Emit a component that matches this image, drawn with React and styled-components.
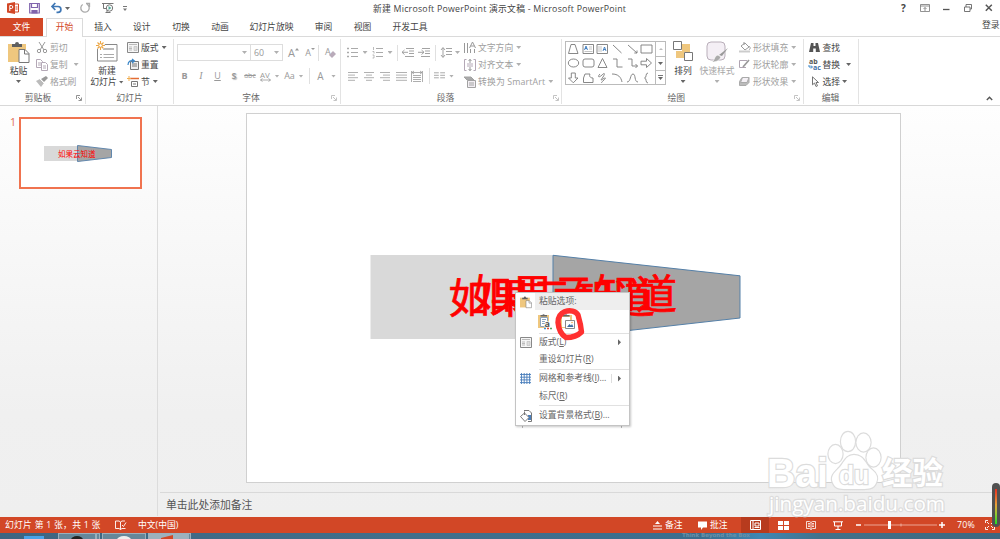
import styled, { createGlobalStyle, css } from 'styled-components';

const GlobalStyle = createGlobalStyle`
  * { box-sizing: border-box; }
  body {
    margin: 0;
    overflow: hidden;
    font: 8.8px/12px "Open Sans", "Noto Sans CJK SC", sans-serif;
    color: #444;
  }
  svg { display: block; flex: none; overflow: visible; }
`;

const Window = styled.div`
  width: 1000px;
  height: 539px;
  display: flex;
  flex-direction: column;
  overflow: hidden;
  background: #fff;
  white-space: nowrap;
`;

const TitleBar = styled.header`
  height: 18px;
  flex: none;
  display: grid;
  grid-template-columns: 373px 1fr 105px;
  align-items: start;
`;

const QuickAccess = styled.div`
  display: flex;
  padding: 2px 0 0 7px;
`;

const Title = styled.div`
  padding-top: 3px;
  letter-spacing: ${p => p.$spacing || 0}px;
`;

const WindowButtons = styled.div`
  display: flex;
  padding: 2px 0 0 2px;
`;

const TabBar = styled.nav`
  height: 19px;
  flex: none;
  display: flex;
  border-bottom: 1px solid #dadada;
`;

const Tab = styled.div`
  width: ${p => p.$w}px;
  height: 18px;
  flex: none;
  line-height: 18px;
  text-align: center;
`;

const FileTab = styled(Tab)`
  background: #d24726;
  color: #fff;
`;

const ActiveTab = styled(Tab)`
  height: 19px;
  margin: 0 1px 0 3px;
  border: 1px solid #dadada;
  border-bottom: 0;
  background: #fff;
  color: #d24726;
  line-height: 16px;
`;

const Login = styled.div`
  margin-left: auto;
  width: 18px;
  line-height: 14px;
`;

const Ribbon = styled.section`
  height: 69px;
  flex: none;
  display: flex;
  border-bottom: 1px solid #d8d8d8;
`;

const Group = styled.div`
  width: ${p => p.$w}px;
  height: 65px;
  margin-top: 2px;
  flex: none;
  display: flex;
  flex-direction: column;
  border-right: 1px solid #e3e3e3;
`;

const GroupBody = styled.div`
  height: 52px;
  display: flex;
`;

const GroupLabel = styled.div`
  height: 13px;
  display: flex;
  align-items: center;
  justify-content: flex-end;
  padding-right: ${p => p.$right ?? 3}px;
  color: #666;

  span { flex: 1; text-align: center; padding-right: ${p => p.$shift || 0}px; }
`;

const BigButton = styled.div`
  width: ${p => p.$w}px;
  margin-left: ${p => p.$ml || 0}px;
  padding-top: 2px;
  flex: none;
  display: flex;
  flex-direction: column;
  align-items: center;
  color: ${p => (p.$off ? '#a6a6a6' : '#444')};
`;

const BigText = styled.div`
  display: flex;
  align-items: center;
  line-height: 12px;
  gap: 2px;
  margin-top: ${p => p.$mt || 0}px;
`;

const Column = styled.div`
  margin-left: ${p => p.$ml || 0}px;
  display: flex;
  flex-direction: column;
`;

const SmallButton = styled.div`
  height: 17px;
  display: flex;
  align-items: center;
  color: ${p => (p.$off ? '#9e9e9e' : '#444')};

  svg:first-child { margin-right: ${p => p.$gap ?? 2}px; }
`;

const Arrow = styled.i`
  flex: none;
  width: 5px;
  height: 3px;
  margin: ${p => p.$m || '0'};
  background: ${p => (p.$off ? '#b0b0b0' : '#666')};
  clip-path: polygon(0 0, 100% 0, 50% 100%);
`;

const ToolRow = styled.div`
  height: ${p => p.$h}px;
  padding: ${p => p.$pt || 0}px 0 0 ${p => p.$pl || 0}px;
  display: flex;
  align-items: center;
  color: #999;
`;

const Slot = styled.div`
  width: ${p => p.$w}px;
  flex: none;
  display: flex;
  justify-content: center;
  ${p => p.$rule && css`
    height: 16px;
    border-left: 1px solid #e0e0e0;
  `}
`;

const Letter = styled(Slot)`
  font-size: ${p => p.$size || 9}px;
  font-weight: ${p => (p.$bold ? 700 : 400)};
  font-style: ${p => (p.$italic ? 'italic' : 'normal')};
  font-family: ${p => (p.$italic ? '"Liberation Serif", serif' : 'inherit')};
  text-decoration: ${p => p.$line || 'none'};
  text-shadow: ${p => (p.$shadow ? '1px 1px 1px #bbb' : 'none')};
`;

const Combo = styled.div`
  width: ${p => p.$w}px;
  height: 17px;
  flex: none;
  display: flex;
  align-items: center;
  justify-content: space-between;
  padding: 0 3px;
  border: 1px solid #ddd;
  margin-right: -1px;
`;

const Gallery = styled.div`
  width: 101px;
  height: 44px;
  margin: 2px 0 0 3px;
  flex: none;
  display: flex;
  border: 1px solid #bbb;
`;

const Shapes = styled.div`
  width: 89px;
  display: grid;
  grid-template-columns: repeat(6, 14.7px);
  grid-template-rows: repeat(3, 14.3px);
  place-items: center;
`;

const GalleryScroll = styled.div`
  flex: 1;
  display: grid;
  grid-template-rows: repeat(3, 1fr);
  border-left: 1px solid #bbb;
`;

const ScrollCell = styled.div`
  display: flex;
  align-items: center;
  justify-content: center;
  & + & { border-top: 1px solid #bbb; }
`;

const RibbonEnd = styled.div`
  flex: 1;
  display: flex;
  align-items: flex-end;
  justify-content: flex-end;
  padding: 0 7px 4px 0;
`;

const Main = styled.main`
  height: 411px;
  flex: none;
  display: flex;
  background: linear-gradient(#fefefe, #f0f0f0 75%, #efefef);
`;

const ThumbPane = styled.aside`
  width: 158px;
  height: 410px;
  flex: none;
  display: flex;
  align-items: flex-start;
  padding: 11px 0 0 10px;
  border-right: 1px solid #dcdcdc;
`;

const ThumbNumber = styled.span`
  width: 9px;
  font-size: 10.5px;
  line-height: 11px;
  color: #e0694c;
`;

const Thumb = styled.div`
  width: 123px;
  height: 72px;
  border: 2px solid #f0734f;
  background: #fff;
`;

const Editor = styled.div`
  flex: 1;
  display: flex;
  flex-direction: column;
`;

const Stage = styled.div`
  height: 386px;
  padding: 7px 0 0 88px;
`;

const Slide = styled.div`
  position: relative;
  width: 655px;
  height: 370px;
  border: 1px solid #d0d0d0;
  background: #fff;
`;

const SlideArt = styled.svg`
  position: absolute;
  left: -1px;
  top: -1px;
`;

const Notes = styled.div`
  margin-left: 2px;
  flex: 1;
  border-top: 1px solid #d9d9d9;
  padding: 6px 0 0 6px;
  color: #555;
  font-size: 10.8px;
`;

const Menu = styled.div`
  position: absolute;
  left: 268px;
  top: 178px;
  width: 115px;
  height: 134px;
  display: flex;
  flex-direction: column;
  background: #fff;
  border: 1px solid #c4c4c4;
  box-shadow: 1px 1px 2px rgba(0, 0, 0, .22);
  color: #666;
`;

const MenuRow = styled.div`
  height: ${p => p.$h || 17.5}px;
  flex: none;
  display: grid;
  grid-template-columns: 19px 1fr 14px;
  align-items: center;
  padding-left: ${p => (p.$options ? 20 : 0)}px;
  ${p => p.$options && css`
    display: flex;
    gap: 8px;
  `}
  svg { justify-self: center; }
`;

const MenuLabel = styled.div`
  padding-left: 4px;
  height: 17px;
  line-height: 17px;
  background: ${p => (p.$head ? '#eee' : 'transparent')};
  grid-column: ${p => (p.$head ? '2 / 4' : '2')};
`;

const MenuRule = styled.hr`
  width: 90px;
  height: 1px;
  flex: none;
  margin: 0 0 0 23px;
  border: 0;
  background: #e1e1e1;
`;

const SubArrow = styled.i`
  width: 3px;
  height: 6px;
  margin-left: 3px;
  background: #666;
  clip-path: polygon(0 0, 100% 50%, 0 100%);
`;

const SplitArrow = styled.div`
  height: 9px;
  display: flex;
  align-items: center;
  border-left: 1px solid #ddd;
  margin-left: -4px;
  padding-left: 3px;
`;

const StatusBar = styled.footer`
  height: 16px;
  flex: none;
  display: flex;
  align-items: center;
  padding-left: 5px;
  background: #d24726;
  color: #fff;
`;

const StatusItem = styled.div`
  width: ${p => p.$w}px;
  height: 16px;
  flex: none;
  display: flex;
  align-items: center;
  gap: 3px;
  padding-left: ${p => p.$pl || 0}px;
  letter-spacing: ${p => p.$spacing || 0}px;
  justify-content: ${p => (p.$center ? 'center' : 'flex-start')};
  background: ${p => (p.$active ? '#b73b1e' : 'transparent')};
`;

const TaskBar = styled.div`
  height: 6px;
  flex: none;
  display: flex;
  background: linear-gradient(90deg, #3d6581, #416f8b 40%, #3b6e8e 70%, #3f87b4 76%, #42718a 82%, #3d6780);
  overflow: hidden;
`;

const TaskButton = styled.div`
  width: ${p => p.$w}px;
  height: 8px;
  margin-left: ${p => p.$ml || 0}px;
  display: flex;
  justify-content: center;
  flex: none;
  border: ${p => (p.$plain ? 0 : '1px solid #9ab0bd')};
  background: ${p => (p.$plain ? 'transparent' : p.$active ? '#9db1bd' : '#66879a')};
`;

const Slogan = styled.div`
  margin-left: 491px;
  font: 700 5.5px/5px "DejaVu Sans", sans-serif;
  color: #6c91a8;
`;

const Watermark = styled.svg`
  position: absolute;
  left: 760px;
  top: 425px;
`;

const Meter = styled.div`
  position: absolute;
  left: 992px;
  top: 483px;
  width: 8px;
  height: 44px;
  padding: 6px 3px 3px;
  border-radius: 4px;
  background: #505050;

  &::before {
    content: '';
    display: block;
    width: 2px;
    height: 35px;
    background: linear-gradient(#e62f20, #e8a03a 45%, #9bc832 70%, #22e022);
  }
`;

const Svg = ({ w = 12, h = 12, color = '#777', children, ...rest }) => (
  <svg width={w} height={h} viewBox={`0 0 ${w} ${h}`} fill='none' stroke={color} {...rest}>
    {children}
  </svg>
);

const Tool = styled(Svg)`
  margin-left: ${p => p.$ml || 0}px;
`;

const Lines = ({ rows, color = '#a8a8a8' }) => (
  <Svg w={11} h={9} color={color}>
    {rows.map(([x, w], i) => <path key={i} d={`M${x} ${i * 2.6 + 0.5}h${w}`} strokeWidth='.9' />)}
  </Svg>
);

const Launcher = ({ off }) => (
  <Svg w={6} h={6} color={off ? '#b5b5b5' : '#777'}>
    <path d='M.5 4V.5H4M2 2l3 3M5.5 2.5v3h-3' strokeWidth='.8' />
  </Svg>
);

const Clipboard = ({ size = 22 }) => (
  <svg width={size} height={size} viewBox='0 0 22 22'>
    <path d='M0 3h18v18H0z' fill='#efc77e' />
    <path d='M4 6V3h3a2 2 0 0 1 4 0h3v3z' fill='#5f5f5f' />
    <path d='M11 8.500h6l4 4V21.500H11z' fill='#fff' stroke='#777' />
    <path d='M16.500 9v4H21' fill='none' stroke='#777' />
  </svg>
);

const LayoutIcon = () => (
  <Svg w={12} h={11} color='#888'>
    <path d='M.5.5h11v10H.5z' fill='#f6f6f6' />
    <path d='M2 2.500h8M2 5h3M2 6.500h3M2 8h3' stroke='#bbb' />
    <path d='M7 4.500h3v4H7z' fill='#ddd' stroke='#bbb' strokeWidth='.6' />
  </Svg>
);

const tabs = [
  ['插入', 38], ['设计', 39.5], ['切换', 39], ['动画', 39],
  ['幻灯片放映', 64], ['审阅', 40], ['视图', 38], ['开发工具', 57],
];

const shapes = [
  <path d='M3 .5h4l3 9H.5z' />,
  <g><path d='M0 .5h10.500v9H0z' /><path d='M1.500 6l1.500-4 1.500 4M2 4.500h2' stroke='#3878bd' /><path d='M6 3h3M6 5h3M1.500 7.500h8' strokeWidth='.7' stroke='#aaa' /></g>,
  <g><path d='M0 .5h10.500v9H0z' /><path d='M2 2v6M4 2v6' strokeWidth='.7' stroke='#aaa' /><path d='M6 7l1.500-4L9 7M6.500 5.500h2' stroke='#3878bd' /></g>,
  <path d='M1 1l8.500 8' />,
  <path d='M1 1l9 8M10 6.500V9H7.300' />,
  <path d='M0 1h11v8H0z' />,
  <ellipse cx='5.500' cy='5' rx='5.200' ry='4' />,
  <rect x='0' y='1' width='11' height='8' rx='2' />,
  <path d='M5.500 .5L10 9.500H1z' />,
  <path d='M1 1h4v8h5.500' />,
  <path d='M1 1h4v7h5.500M8.500 6l2 2-2 2' />,
  <path d='M0 3.200h5.500V.5L10.500 5 5.500 9.500V6.800H0z' />,
  <path d='M3.300 0h4v5H10L5.300 9.800.5 5h2.800z' />,
  <path d='M2 1h5c-1 2 0 4 3 4v4.500H.5V5z' />,
  <path d='M3 1C0 4 2 5 5 2s3-1 1 2-3 4 0 2 3-1 1 1-3 2-2 3' />,
  <path d='M0 1c6 0 9 3 10 8' />,
  <path d='M0 9c4 0 3-8 6-8s1 8 5 8' />,
  <path d='M7 0C4 0 6 5 3.500 5 6 5 4 10 7 10' />,
];

const Header = () => (
  <TitleBar>
    <QuickAccess>
      <Svg w={12} h={12} color='none'>
        <path d='M0 1.500L8 0v12L0 10.500z' fill='#d24726' />
        <path d='M8 2h3.500v8H8' fill='#fff' stroke='#d24726' />
        <path d='M8.500 5h2M8.500 7h2' stroke='#d24726' />
        <path d='M2.800 9V3.500h1.500a1.500 1.500 0 0 1 0 3H3' stroke='#fff' />
      </Svg>
      <Tool w={11} h={12} color='#8064ad' strokeWidth='1.200' $ml={10}>
        <path d='M.7 1.500h9.600v9.500H.7zM2.500 1.500v4h6v-4' /><path d='M3 8.500h5v2.500H3z' fill='#8064ad' />
      </Tool>
      <Tool w={11} h={12} color='#3f77b5' strokeWidth='1.700' $ml={11}>
        <path d='M1 4.500h6a2.800 2.800 0 0 1 0 5.800H5.500M4.300 1L1 4.500 4.300 8' />
      </Tool>
      <Arrow $m='5px 0 0 3px' />
      <Tool w={10} h={12} color='#aaa' strokeWidth='1.300' $ml={10}>
        <path d='M7 2.300A4.200 4.200 0 1 1 2.700 2.500M6 1.500h3.500V5' />
      </Tool>
      <Tool w={12} h={12} color='#777' $ml={12}>
        <path d='M0 1.500h11.500M1.500 1.500v5H5M3.500 10.500h5M5 7.500v3' />
        <circle cx='7.500' cy='6' r='3.200' fill='#fff' /><path d='M6.500 4v4L9.500 6z' fill='#5a9' stroke='none' />
      </Tool>
      <Tool w={4} h={12} $ml={9}><path d='M0 4.500h4' /><path d='M0 6.500h4L2 9z' fill='#777' stroke='none' /></Tool>
    </QuickAccess>
    <Title $spacing={0.23}>新建 Microsoft PowerPoint 演示文稿 - Microsoft PowerPoint</Title>
    <WindowButtons>
      <Letter $w={13} $bold $size={10}>?</Letter>
      <Tool w={10} h={12} $ml={10}><path d='M.5 2.500h9v7h-9zM.5 4h9M5 9V5.500M3.500 7L5 5.500 6.500 7' strokeWidth='.8' /></Tool>
      <Tool w={8} h={12} $ml={13} color='#555'><path d='M0 7.500h6.500' strokeWidth='1.300' /></Tool>
      <Tool w={8} h={12} $ml={13} color='#666'><path d='M.5 5h5.500v4.500H.5zM2 5V2.500h5.500v4.500H6' strokeWidth='.9' /></Tool>
      <Tool w={8} h={12} $ml={13} color='#555'><path d='M.8 2.800l6 6M6.800 2.800l-6 6' strokeWidth='1.500' /></Tool>
    </WindowButtons>
  </TitleBar>
);

const ClipboardGroup = () => (
  <Group $w={86}>
    <GroupBody>
      <BigButton $w={21} $ml={8}>
        <Clipboard />
        <BigText $mt={2}>粘贴</BigText>
        <Arrow $m='3px 0 0' />
      </BigButton>
      <Column $ml={7}>
        <SmallButton $off>
          <Svg w={12} color='#999'><path d='M3 0l5 8M9 0L4 8' /><circle cx='3' cy='9' r='1.700' /><circle cx='9' cy='9' r='1.700' /></Svg>
          剪切
        </SmallButton>
        <SmallButton $off>
          <Svg w={12} color='#b4a8b6'><path d='M.5.5h4l2 2v6h-6zM2 4h3M2 6h3' /><path d='M5.500 3.500h4l2 2v6h-6z' fill='#fff' /><path d='M7 7h3M7 9h3' /></Svg>
          复制<Arrow $off $m='0 0 0 6px' />
        </SmallButton>
        <SmallButton $off>
          <Svg w={12} color='none'><path d='M0 5l4-2 4 4-3 4z' fill='#bbb' /><path d='M5 3l5-3 2 2-4 4z' fill='#999' /><path d='M4 3l4 4' stroke='#fff' /></Svg>
          格式刷
        </SmallButton>
      </Column>
    </GroupBody>
    <GroupLabel><span>剪贴板</span><Launcher /></GroupLabel>
  </Group>
);

const SlidesGroup = () => (
  <Group $w={88}>
    <GroupBody>
      <BigButton $w={36} $ml={3}>
        <Svg w={22} h={21} color='#888'>
          <path d='M1.500 3.500h19.500v16.500H1.500z' fill='#fff' /><path d='M7 8h11' strokeWidth='2' stroke='#bbb' /><path d='M4 13.500h2M7.500 13.500h10.500M4 16.500h2M7.500 16.500h10.500' stroke='#aaa' />
          <circle cx='4.500' cy='4.500' r='4.500' fill='#fff' stroke='none' />
          <path d='M4.500 0v9M0 4.500h9M1.500 1.500l6 6M7.500 1.500l-6 6' stroke='#eda745' strokeWidth='1.100' />
          <circle cx='4.500' cy='4.500' r='1.800' fill='#fff' stroke='#eda745' />
        </Svg>
        <BigText $mt={3}>新建</BigText>
        <BigText $mt={-1}>幻灯片<Arrow /></BigText>
      </BigButton>
      <Column $ml={2}>
        <SmallButton><LayoutIcon />版式<Arrow $m='0 0 0 3px' /></SmallButton>
        <SmallButton>
          <Svg w={12} h={11}><path d='M3.500 2.500h8v8h-8z' fill='#eee' /><path d='M5 5h5M5 7h5' /><path d='M1 6c0-4 3-5 6-4M5 0l2.500 2L5 4' stroke='#3a86c8' strokeWidth='1.200' /></Svg>
          重置
        </SmallButton>
        <SmallButton>
          <Svg w={12} h={11}><path d='M4.500 5.500h6v5h-6zM6 8h3' /><path d='M3 2.500h9' stroke='#e36c36' strokeWidth='1.500' /><path d='M2 0v5M0 2.500h4' stroke='#f0ad50' /></Svg>
          节<Arrow $m='0 0 0 3px' />
        </SmallButton>
      </Column>
    </GroupBody>
    <GroupLabel $right={0}><span>幻灯片</span></GroupLabel>
  </Group>
);

const FontGroup = () => (
  <Group $w={167}>
    <GroupBody>
      <Column>
        <ToolRow $h={27} $pl={3}>
          <Combo $w={74}><span /><Arrow $off /></Combo>
          <Combo $w={33}>60<Arrow $off /></Combo>
          <Slot $w={3} />
          <Letter $w={17} $size={11}>A<Svg w={4} h={4}><path d='M2 1l2 2.500H0z' fill='#999' stroke='none' /></Svg></Letter>
          <Letter $w={16} $size={9}>A<Svg w={4} h={4}><path d='M0 1h4L2 3z' fill='#999' stroke='none' /></Svg></Letter>
          <Slot $w={1} $rule />
          <Slot $w={23}>
            <Svg w={12} color='none'><text x='0' y='8' fontSize='9' fill='#999'>A</text><path d='M4 8l4-4 3 3-4 4z' fill='#b9abba' /></Svg>
          </Slot>
        </ToolRow>
        <ToolRow $h={20} $pl={2}>
          <Letter $w={17} $bold>B</Letter>
          <Letter $w={16} $italic $size={10}>I</Letter>
          <Letter $w={17} $line='underline'>U</Letter>
          <Letter $w={16} $bold $shadow>S</Letter>
          <Letter $w={16} $size={7} $line='line-through'>abc</Letter>
          <Slot $w={15}>
            <Svg w={11} h={11} color='#999'><text x='0' y='6.500' fontSize='8' stroke='none' fill='#999'>AV</text><path d='M.5 9h10M2.500 7.500L.5 9l2 1.500M8.500 7.500l2 1.500-2 1.500' strokeWidth='.8' /></Svg>
          </Slot>
          <Slot $w={8}><Arrow $off /></Slot>
          <Letter $w={17}>Aa</Letter>
          <Slot $w={6}><Arrow $off /></Slot>
          <Slot $w={5} />
          <Slot $w={1} $rule />
          <Letter $w={21} $size={10}>A</Letter>
          <Arrow $off />
        </ToolRow>
      </Column>
    </GroupBody>
    <GroupLabel $shift={3}><span>字体</span><Launcher off /></GroupLabel>
  </Group>
);

const ParagraphGroup = () => (
  <Group $w={221}>
    <GroupBody>
      <Column>
        <ToolRow $h={27} $pl={6}>
          <Svg w={11} h={11} color='#aaa'><path d='M4 1.500h7M4 5.500h7M4 9.500h7' /><path d='M0 1.500h2M0 5.500h2M0 9.500h2' strokeWidth='1.600' /></Svg>
          <Slot $w={14}><Arrow $off /></Slot>
          <Svg w={11} h={11} color='#aaa'><path d='M4 1.500h7M4 5.500h7M4 9.500h7' /><path d='M1.500 0v3M.5 4.500h1.500v2M.5 8h1.500v3H.5' strokeWidth='.8' /></Svg>
          <Slot $w={14}><Arrow $off /></Slot>
          <Slot $w={5} $rule />
          <Svg w={12} h={9} color='#999'><path d='M4 .5h8M7 3h5M7 5.500h5M3 8.500h9M0 4.300h6M2.500 2L0 4.300l2.500 2.200' strokeWidth='.9' /></Svg>
          <Slot $w={4} />
          <Svg w={12} h={9} color='#999'><path d='M4 .5h8M7 3h5M7 5.500h5M3 8.500h9M0 4.300h6M3.500 2L6 4.300l-2.500 2.200' strokeWidth='.9' /></Svg>
          <Slot $w={5} />
          <Slot $w={6} $rule />
          <Svg w={11} h={11} color='#999'><path d='M5 1.500h6M5 4.500h6M5 7.500h6M2 1v9M0 3l2-2.500L4 3M0 8l2 2.500L4 8' strokeWidth='.9' /></Svg>
          <Arrow $off $m='0 0 0 3px' />
        </ToolRow>
        <ToolRow $h={20} $pl={4}>
          <Slot $w={16}><Lines rows={[[0, 10], [0, 7], [0, 10], [0, 7]]} /></Slot>
          <Slot $w={16}><Lines rows={[[0, 10], [2, 6], [0, 10], [2, 6]]} /></Slot>
          <Slot $w={16}><Lines rows={[[0, 10], [3, 7], [0, 10], [3, 7]]} /></Slot>
          <Slot $w={16}><Lines rows={[[0, 11], [0, 11], [0, 11], [0, 11]]} /></Slot>
          <Slot $w={16}><Svg w={12} h={11} color='#999'><path d='M.5 0v11M11.500 0v11M1 1.500h10M3 0L1 1.500 3 3M9 0l2 1.500L9 3M2 4.500h8M2 6.500h8M2 8.500h8M2 10.500h8' strokeWidth='.8' /></Svg></Slot>
          <Slot $w={4} />
          <Slot $w={5} $rule />
          <Svg w={11} h={8} color='#aaa'><path d='M0 .8h4.800M0 3.300h4.800M0 5.800h4.800M6.200.8H11M6.200 3.300H11M6.200 5.800H11' /></Svg>
          <Arrow $off $m='0 0 0 4px' />
        </ToolRow>
      </Column>
      <Column $ml={4}>
        <SmallButton $off>
          <Svg w={12} color='#999'><path d='M.5 1v10M3.500 1v10M6.500 7v4M10.500 7v4' /><path d='M5.500 6l3-6 3 6M6.500 4h4' /></Svg>
          文字方向<Arrow $off $m='0 0 0 3px' />
        </SmallButton>
        <SmallButton $off>
          <Svg w={12} color='#b4a8b6'><path d='M2.500.5h-2v11h2M9.500.5h2v11h-2M3 5h6M3 7h6' /><path d='M6 0v4M4.500 2L6 .5 7.500 2M6 8v4M4.500 10L6 11.500 7.500 10' stroke='#999' /></Svg>
          对齐文本<Arrow $off $m='0 0 0 3px' />
        </SmallButton>
        <SmallButton $off>
          <Svg w={12} color='#a2a2a2'><path d='M0 1h7l3 3H3z' fill='#aaa' /><path d='M3.500 4.500h8v7h-8z' fill='#f3eff4' /><path d='M5 7h5M5 9h5' /></Svg>
          <Title as='span' $spacing={0.15} style={{ paddingTop: 0 }}>转换为 SmartArt</Title><Arrow $off $m='0 0 0 3px' />
        </SmallButton>
      </Column>
    </GroupBody>
    <GroupLabel $right={2} $shift={3}><span>段落</span><Launcher off /></GroupLabel>
  </Group>
);

const DrawingGroup = () => (
  <Group $w={241.5}>
    <GroupBody>
      <Gallery>
        <Shapes>
          {shapes.map((shape, i) => <Svg key={i} w={11} h={10} color='#7a7a7a' strokeWidth='.9'>{shape}</Svg>)}
        </Shapes>
        <GalleryScroll>
          <ScrollCell><Svg w={4} h={2}><path d='M2 0l2 2H0z' fill='#bbb' stroke='none' /></Svg></ScrollCell>
          <ScrollCell><Arrow /></ScrollCell>
          <ScrollCell><Svg w={5} h={5}><path d='M0 .5h5' /><path d='M0 2h5L2.500 5z' fill='#666' stroke='none' /></Svg></ScrollCell>
        </GalleryScroll>
      </Gallery>
      <BigButton $w={22} $ml={6}>
        <Svg w={20} h={21} color='#777'>
          <path d='M9 3h8v8H9zM3 10h8v7H3z' fill='#efc77e' stroke='none' />
          <path d='M.5.5h8v8h-8zM11.500 11.500h8v8h-8z' fill='#fff' />
        </Svg>
        <BigText $mt={3}>排列</BigText>
        <Arrow $m='3px 0 0' />
      </BigButton>
      <BigButton $w={36} $ml={5} $off>
        <Svg w={22} h={22} color='#b9afba'>
          <rect x='1' y='1' width='18' height='18' rx='4' fill='#f4eff5' />
          <path d='M22 7l-6 8-3-1z' fill='#999' stroke='none' />
          <path d='M12 14l3 2c-2 4-5 5-9 5 3-2 2-6 6-7z' fill='#aaa' stroke='#fff' strokeWidth='.6' />
        </Svg>
        <BigText $mt={2}>快速样式</BigText>
        <Arrow $off $m='3px 0 0' />
      </BigButton>
      <Column $ml={4}>
        <SmallButton $off>
          <Svg w={12} h={11} color='#999'><path d='M2 4l4-3 4 4-4 3zM5 3V0' fill='#fff' /><path d='M10 4c2 2 1 3 0 4' /><path d='M0 9.500h11' stroke='#ccc' strokeWidth='2' /></Svg>
          形状填充<Arrow $off $m='0 0 0 3px' />
        </SmallButton>
        <SmallButton $off>
          <Svg w={12} h={11} color='#b0a5b2'><path d='M8 1.500H.5v7H7' /><path d='M4 8l6-7' stroke='#999' strokeWidth='1.700' /></Svg>
          形状轮廓<Arrow $off $m='0 0 0 3px' />
        </SmallButton>
        <SmallButton $off>
          <Svg w={12} h={11} color='#aaa'><path d='M3 1.500h7v5l-3 3H0.500v-4z' fill='#bbb' /><path d='M3.500 1.500h6.500l-2 5H1.500z' fill='#f4f0f5' /></Svg>
          形状效果<Arrow $off $m='0 0 0 3px' />
        </SmallButton>
      </Column>
    </GroupBody>
    <GroupLabel $shift={3}><span>绘图</span><Launcher off /></GroupLabel>
  </Group>
);

const EditGroup = () => (
  <Group $w={55}>
    <GroupBody>
      <Column $ml={5}>
        <SmallButton $gap={3}>
          <Svg w={11} h={11} color='none'><path d='M2 1h2.500v3h2V1H9l2 9H6.800V6.500H4.200V10H0z' fill='#555' /></Svg>
          查找
        </SmallButton>
        <SmallButton $gap={3}>
          <Svg w={11} h={11} color='none'>
            <text x='0' y='5' fontSize='7' fontWeight='700' fill='#555'>ab</text>
            <text x='4' y='11' fontSize='7' fontWeight='700' fill='#4472a8'>ac</text>
            <path d='M0 6v2h3M2 6.500L3.500 8 2 9.500' stroke='#3a86c8' />
          </Svg>
          替换<Arrow $m='0 0 0 6px' />
        </SmallButton>
        <SmallButton $gap={3}>
          <Svg w={11} h={11} color='#666'><path d='M3.500.8v8l2-1.800 1.500 3.500 1.500-.7L7 6.500h2.500z' strokeWidth='.9' /></Svg>
          选择<Arrow $m='0 0 0 2px' />
        </SmallButton>
      </Column>
    </GroupBody>
    <GroupLabel $right={0}><span>编辑</span></GroupLabel>
  </Group>
);

const ContextMenu = () => (
  <Menu>
    <MenuRow $h={17.5}><Clipboard size={12} /><MenuLabel $head>粘贴选项:</MenuLabel></MenuRow>
    <MenuRow $h={22} $options>
      <Svg w={16} h={17} color='none'>
        <path d='M2 2h11v13H2z' fill='#efc77e' /><path d='M4.500 3.500V2H6.300a1.500 1.500 0 0 1 2.500 0H11v1.500z' fill='#666' />
        <path d='M4.500 4.500h7v9h-7z' fill='#fff' stroke='#8ba3be' /><path d='M6 6.500h4M6 8.500h3M6 10.500h3' stroke='#8ba3be' />
        <text x='8.500' y='14' fontSize='9' fontWeight='700' fill='#555' stroke='#fff' strokeWidth='1.500' paintOrder='stroke'>a</text>
        <path d='M8 15.500h2' stroke='#3d8fd0' strokeWidth='1.500' /><path d='M11 15.500h2' stroke='#e34b35' strokeWidth='1.500' /><path d='M14 15.500h2' stroke='#54a264' strokeWidth='1.500' />
      </Svg>
      <Svg w={16} h={17} color='none'>
        <path d='M0 2h12v13H0z' fill='#efc77e' /><path d='M3 3.500V2h1.800a1.500 1.500 0 0 1 2.500 0H9.500v1.500z' fill='#666' />
        <path d='M2 4h8v10H2z' fill='#fff' />
        <path d='M5.500 7.500h9v8h-9z' fill='#fff' stroke='#888' /><path d='M7 14l2.500-3 1.500 1.500L12 11l1.500 3z' fill='#3c6ea5' /><circle cx='12' cy='9.500' r='.8' fill='#edae50' />
      </Svg>
    </MenuRow>
    <MenuRule />
    <MenuRow><LayoutIcon /><MenuLabel>版式(<u>L</u>)</MenuLabel><SubArrow /></MenuRow>
    <MenuRow><span /><MenuLabel>重设幻灯片(<u>R</u>)</MenuLabel></MenuRow>
    <MenuRule />
    <MenuRow $h={18}>
      <Svg w={11} h={11} color='#4a7ebb'><path d='M1.500 0v11M4.200 0v11M6.900 0v11M9.600 0v11M0 1.500h11M0 4.200h11M0 6.900h11M0 9.600h11' strokeWidth='.9' /></Svg>
      <MenuLabel>网格和参考线(<u>I</u>)...</MenuLabel><SplitArrow><SubArrow /></SplitArrow>
    </MenuRow>
    <MenuRow><span /><MenuLabel>标尺(<u>R</u>)</MenuLabel></MenuRow>
    <MenuRule />
    <MenuRow $h={19}>
      <Svg w={12} h={12} color='#777'><path d='M4 .5h5l2.500 2.500v8.500H8' /><path d='M8 5h3v5H8z' fill='#4a7ebb' stroke='none' /><path d='M.5 6.500L4.500 3 9 7.500 5 11.500zM4.500 5V1.500' fill='#fff' /></Svg>
      <MenuLabel>设置背景格式(<u>B</u>)...</MenuLabel>
    </MenuRow>
  </Menu>
);

export default function App() {
  return (
    <Window>
      <GlobalStyle />
      <Header />
      <TabBar>
        <FileTab $w={43}>文件</FileTab>
        <ActiveTab $w={37}>开始</ActiveTab>
        {tabs.map(([name, w]) => <Tab key={name} $w={w}>{name}</Tab>)}
        <Login>登录</Login>
      </TabBar>
      <Ribbon>
        <ClipboardGroup />
        <SlidesGroup />
        <FontGroup />
        <ParagraphGroup />
        <DrawingGroup />
        <EditGroup />
        <RibbonEnd><Svg w={7} h={5} color='#555'><path d='M.8 4L3.500 1.300 6.200 4' strokeWidth='1.400' /></Svg></RibbonEnd>
      </Ribbon>
      <Main>
        <ThumbPane>
          <ThumbNumber>1</ThumbNumber>
          <Thumb>
            <svg width='119' height='68'>
              <path d='M23 27h34v15H23z' fill='#d9d9d9' />
              <path d='M56.500 26.500l34 4v8l-34 4z' fill='#a5a5a5' stroke='#6187ad' />
              <text x='37' y='37.500' fontSize='7.500' fill='#f00'>如果云知道</text>
            </svg>
          </Thumb>
        </ThumbPane>
        <Editor>
          <Stage>
            <Slide>
              <SlideArt width='655' height='370' viewBox='246 113 655 370'>
                <path d='M370.500 255H553v84H370.500z' fill='#d9d9d9' />
                <path d='M553 255.300L740 275.800V318L553 339z' fill='#a5a5a5' stroke='#5580a8' />
                <g fill='#f00' stroke='#f00' strokeWidth='.7' fontSize='41.300'>
                  <text x='448.500' y='313'>如果云知道</text>
                  <text x='470.500' y='308.500'>如果云知道</text>
                </g>
                <path d='M522.500 426v2M621.500 426v2' stroke='#bbb' />
              </SlideArt>
              <ContextMenu />
              <SlideArt width='655' height='370' viewBox='246 113 655 370'>
                <path d='M565 311.500c5-1.500 11-.5 13 3.500 1.500 5 3 11 3.500 17-4 4-10 5.500-15.500 5.500-5-3-7.500-9-8-15 0-5 2-9 7-11z' fill='none' stroke='#ff3030' strokeWidth='5.400' strokeLinejoin='round' />
              </SlideArt>
            </Slide>
          </Stage>
          <Notes>单击此处添加备注</Notes>
        </Editor>
      </Main>
      <StatusBar>
        <StatusItem $w={110} $spacing={0.25}>幻灯片 第 1 张，共 1 张</StatusItem>
        <StatusItem $w={23}>
          <Svg w={11} h={10} color='#fff' strokeWidth='.9'><path d='M5.500 2v7.500M5.500 2L4 1H.5v7.500H4l1.500 1L7 8.500h3.500M5.500 2L7 1h3M7 5l1.500 1.500L11 2.500' /></Svg>
        </StatusItem>
        <StatusItem $w={515}>中文(中国)</StatusItem>
        <StatusItem $w={45}>
          <Svg w={9} h={9} color='#fff'><path d='M0 5h9M0 8h9' /><path d='M4.500 0l2.500 3H2z' fill='#fff' stroke='none' /></Svg>备注
        </StatusItem>
        <StatusItem $w={43}>
          <Svg w={9} h={9} color='none'><path d='M0 .5h9v6H5L3 9V6.500H0z' fill='#fff' /></Svg>批注
        </StatusItem>
        <StatusItem $w={28} $center $active>
          <Svg w={11} h={10} color='#fff'><path d='M.5.5h10v9H.5zM3 .5v9M5 3h4v3H5zM4.500 7.500h5' /></Svg>
        </StatusItem>
        <StatusItem $w={29} $center>
          <Svg w={11} h={9} color='none'><path d='M0 0h5v4H0zM6 0h5v4H6zM0 5h5v4H0zM6 5h5v4H6z' fill='#fff' /></Svg>
        </StatusItem>
        <StatusItem $w={26} $center>
          <Svg w={10} h={9} color='#fff' strokeWidth='.8'><path d='M5 1.500v7M5 1.500L3.500.5h-3v7h3l1.500 1 1.500-1h3v-7h-3zM2 2.500h2M2 4h2M2 5.500h2M6 2.500h2M6 4h2M6 5.500h2' /></Svg>
        </StatusItem>
        <StatusItem $w={28} $center>
          <Svg w={10} h={9} color='#fff'><path d='M0 .8h10M1.500 1v4h7V1M5 5v3M2.500 8.500h5' /></Svg>
        </StatusItem>
        <StatusItem $w={105} $pl={4}>
          <Svg w={90} h={10} color='#fff'>
            <path d='M0 5h5M83 5h6M86 2v6' strokeWidth='1.500' />
            <path d='M8 5h73M45 3.500v3' strokeWidth='.8' stroke='#f2bfb0' /><path d='M33.500 1v8' strokeWidth='3' />
          </Svg>
        </StatusItem>
        <StatusItem $w={28} $spacing={0.2}>70%</StatusItem>
        <Svg w={10} h={10} color='#fff' strokeWidth='.9'><path d='M3 .5H.5V3M7 .5h2.500V3M3 9.500H.5V7M7 9.500h2.500V7M2 2l2 2M8 2L6 4M2 8l2-2M8 8L6 6' /></Svg>
      </StatusBar>
      <TaskBar>
        <TaskButton $plain $w={20} $ml={24}><Svg w={20} h={6}><path d='M0 3h20v3H0z' fill='#4aa3e8' stroke='none' /></Svg></TaskButton>
        <TaskButton $w={38} $ml={14}><Svg w={14} h={6}><ellipse cx='7' cy='6' rx='6' ry='4' fill='#222' stroke='none' /></Svg></TaskButton>
        <TaskButton $w={4} />
        <TaskButton $w={44} $ml={2}><Svg w={14} h={6}><ellipse cx='7' cy='6' rx='7' ry='4' fill='#eee' stroke='none' /></Svg></TaskButton>
        <TaskButton $w={40} $ml={2} $active><Svg w={14} h={6}><path d='M0 4l12-3v5H0z' fill='#d24726' stroke='none' /></Svg></TaskButton>
        <TaskButton $w={3} />
        <Slogan>Think Beyond the Box</Slogan>
      </TaskBar>
      <Watermark width='190' height='95' viewBox='760 425 190 95'>
        <g fill='#fff' stroke='#dcdcdc' strokeWidth='2.400' paintOrder='stroke' fontWeight='700'>
          <text x='767' y='487' fontSize='40' textLength='61' lengthAdjust='spacingAndGlyphs' fontFamily='Liberation Sans'>Bai</text>
          <ellipse cx='835.500' cy='454' rx='7' ry='9' />
          <ellipse cx='848' cy='441.500' rx='7' ry='9.500' />
          <ellipse cx='863.500' cy='442.500' rx='7' ry='9' />
          <ellipse cx='873.500' cy='457.500' rx='7' ry='9' />
          <path d='M854 455c10 0 11 9 17 14 5 4 8 8 5 14-3 7-9 6-22 6s-18 1-21-6c-3-6 1-10 5-14 6-5 7-14 16-14z' />
          <text x='839' y='484' fontSize='25' textLength='30' lengthAdjust='spacingAndGlyphs' fontFamily='Liberation Sans'>du</text>
          <text x='882' y='484' fontSize='30.500'>经验</text>
          <text x='769' y='511' fontSize='20' fontWeight='400' textLength='176' lengthAdjust='spacingAndGlyphs'>jingyan.baidu.com</text>
        </g>
      </Watermark>
      <Meter />
    </Window>
  );
}
